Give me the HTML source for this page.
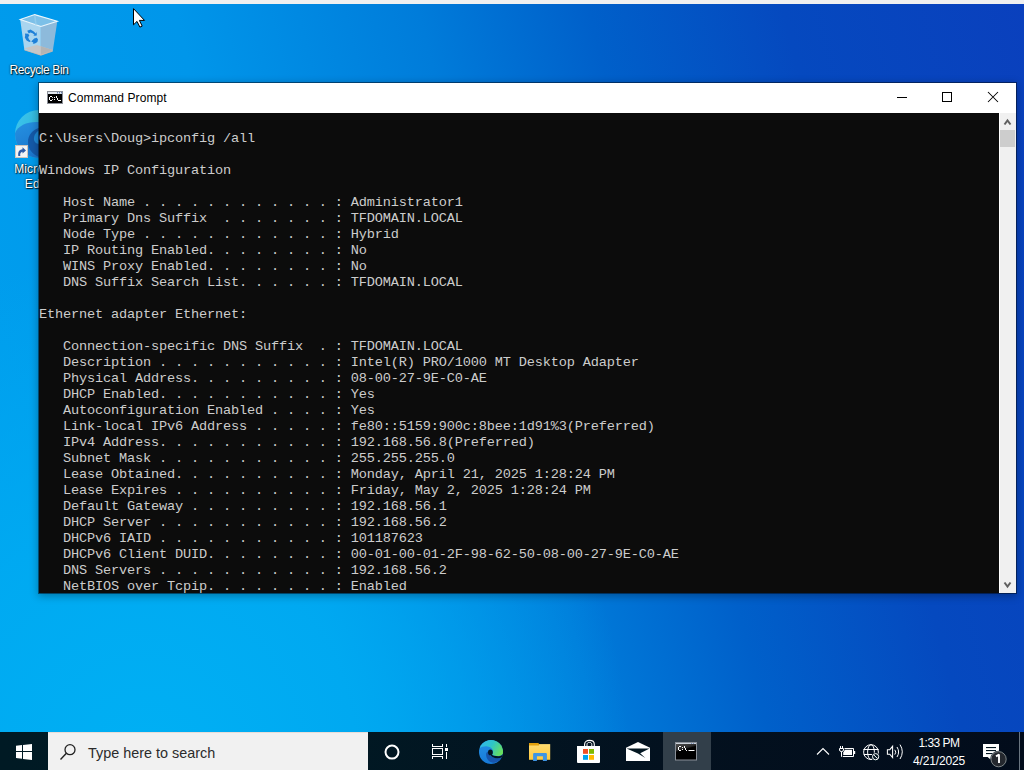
<!DOCTYPE html>
<html><head><meta charset="utf-8">
<style>
*{margin:0;padding:0;box-sizing:border-box}
html,body{width:1024px;height:770px;overflow:hidden}
body{position:relative;font-family:"Liberation Sans",sans-serif;background:#0090e8}
#bg{position:absolute;left:0;top:0;width:1024px;height:770px;
background:radial-gradient(ellipse 480px 520px at 150px 770px,rgba(0,176,244,1) 0%,rgba(0,172,242,.85) 45%,rgba(0,165,238,0) 100%),
linear-gradient(76deg,#00a0ee 0%,#0096ea 30%,#007cda 50%,#0060ca 64%,#0549bf 80%,#0a40bd 100%);}
#topstrip{position:absolute;left:0;top:0;width:1024px;height:4px;background:#f0f0f0}
.lbl{position:absolute;color:#fff;font-size:12px;line-height:15px;text-align:center;white-space:nowrap;letter-spacing:-0.4px;
text-shadow:0 0 2px rgba(0,0,0,.9),1px 1px 1px rgba(0,0,0,.8)}
svg{position:absolute;overflow:visible}
#win{position:absolute;left:38px;top:82px;width:979px;height:512px;background:#fff;background-clip:padding-box;border:1px solid rgba(0,10,25,.5);
box-shadow:0 2px 8px rgba(0,0,0,.3)}
#title{position:absolute;left:0;top:0;width:100%;height:30px;background:#fff}
#title .t{position:absolute;left:29px;top:8.3px;font-size:12px;line-height:14px;color:#000;letter-spacing:0.1px}
#console{position:absolute;left:0;top:30px;width:960px;height:480px;background:#0c0c0c;overflow:hidden}
#console pre{font-family:"Liberation Mono",monospace;font-size:13.6px;letter-spacing:-0.16133px;line-height:16px;color:#cccccc;white-space:pre;padding-top:2px}
#sb{position:absolute;left:961px;top:30px;width:16px;height:480px;background:#f0f0f0}
#thumb{position:absolute;left:0;top:17px;width:15px;height:17px;background:#cdcdcd}
#taskbar{position:absolute;left:0;top:732px;width:1024px;height:38px;background:linear-gradient(90deg,#001a24 0%,#011823 35%,#03111f 65%,#020c1b 100%)}
#search{position:absolute;left:48px;top:0;width:320px;height:38px;background:#f1f1f1;border-top:1px solid #e8ddd8}
#search .t{position:absolute;left:40px;top:12px;font-size:14.4px;line-height:16px;color:#2b2b2b}
#active{position:absolute;left:663px;top:0;width:48px;height:38px;background:#323f4a}
.clock{position:absolute;color:#fff;font-size:12px;line-height:14px;text-align:center;white-space:nowrap}
#sdline{position:absolute;left:1019px;top:0;width:1px;height:38px;background:#6a7580}
</style></head><body>
<div id="bg"></div>
<div id="topstrip"></div>

<!-- Recycle bin -->
<svg style="left:0;top:0" width="80" height="80" viewBox="0 0 80 80">
  <path d="M20.2 19.5 L24.4 49.9 L40.9 55.2 L40.9 26.5 Z" fill="#a9d5ef"/>
  <path d="M40.9 26.5 L40.9 55.2 L52.8 51.1 L57.3 21.2 Z" fill="#8dbadb"/>
  <path d="M24.4 48.3 L36.6 44.9 L52.8 49.9 L40.9 55.2 Z" fill="#c6c6c6"/>
  <path d="M36.6 44.9 L52.8 49.9 L40.9 55.2 L40.9 46.2 Z" fill="#b4b4b4"/>
  <path d="M24.4 49.9 L40.9 55.2 L52.8 51.1" stroke="#d9b9a6" stroke-width="0.8" fill="none"/>
  <path d="M20.2 19.5 L34.7 14.6 L57.3 21.2 L40.9 26.5 Z" fill="#7cc0e8" stroke="#eef7fc" stroke-width="1.1"/>
  <path d="M34.7 15 L36 25" stroke="#9ad0ee" stroke-width="1.6" fill="none" opacity=".7"/>
  <g fill="#1e80d8">
    <path d="M27.2 30.8 L30.5 29.6 L33.8 31.6 L35.8 33.4 L36.6 31.8 L36.8 35.6 L33.2 36 L34.6 35 L32.6 33.2 L30.4 32.4 L28.8 33.4 Z"/>
    <path d="M25 33.6 L28 33.8 L29.4 35.2 L28.2 37.2 L29 39.6 L30.8 41.2 L29.4 42 L26.6 40.4 L24.8 37.4 L25.2 35.6 Z"/>
    <path d="M31.2 41.4 L34.2 38.4 L36.8 37.8 L38 39.4 L37.4 42 L35 43.4 L32.8 43.8 L33.4 42.6 Z"/>
  </g>
</svg>
<div class="lbl" style="left:0;top:63px;width:78px">Recycle Bin</div>

<!-- Edge desktop icon -->
<svg style="left:0;top:100px" width="50" height="70" viewBox="0 100 50 70">
  <defs>
    <linearGradient id="edT" x1="0" y1="0" x2="1" y2="0.3"><stop offset="0" stop-color="#3cc4f0"/><stop offset="1" stop-color="#2ab0c8"/></linearGradient>
    <linearGradient id="edB" x1="0" y1="0" x2="0.6" y2="1"><stop offset="0" stop-color="#2592e2"/><stop offset="1" stop-color="#1a70c8"/></linearGradient>
    <clipPath id="edC"><circle cx="39" cy="134" r="24"/></clipPath>
  </defs>
  <circle cx="39" cy="134" r="24" fill="url(#edT)"/>
  <g clip-path="url(#edC)">
    <path d="M14 138 C14 127 26 121 39 122 C50 123 58 130 60 140 L60 160 L14 160 Z" fill="url(#edB)"/>
    <path d="M40 127.5 C32 129.5 27.5 136 28 143 C28.5 151 35 156.5 44 158.5 L60 160 L60 127.5 Z" fill="#1459a8"/>
    <path d="M40 130 C35.5 132 33.5 136 34 140 C35 143 37 144 40 144 Z" fill="#1e8ad8"/>
  </g>
  <rect x="15.5" y="145.5" width="12" height="12" fill="#f4f4f4" stroke="#d0c4bc" stroke-width="1"/>
  <path d="M18.3 156 C17.8 152 19 149.5 22.5 149.2 L22.5 147.2 L26 150.4 L22.5 153.6 L22.5 151.8 C20.8 152 19.8 153.5 20.3 156 Z" fill="#2d5aa6"/>
</svg>
<div class="lbl" style="left:0;top:161.6px;width:78px;letter-spacing:0.1px">Microsoft<br>Edge</div>

<div id="win">
  <div id="title">
    <svg style="left:8px;top:8px" width="16" height="13" viewBox="0 0 16 13">
      <rect x="0.5" y="0.5" width="15" height="12" fill="#000" stroke="#8c9098" stroke-width="1"/>
      <rect x="1" y="1" width="14" height="2" fill="#dfe5ec"/>
      <rect x="10" y="1.3" width="1" height="1" fill="#3a5a9a"/><rect x="12" y="1.3" width="1" height="1" fill="#3a5a9a"/><rect x="14" y="1.3" width="1" height="1" fill="#3a5a9a"/>
      <g fill="#fff">
        <rect x="3" y="5" width="2" height="1"/><rect x="2" y="6" width="1" height="3"/><rect x="3" y="9" width="2" height="1"/>
        <rect x="5" y="6" width="1" height="0.8"/><rect x="5" y="8.2" width="1" height="0.8"/>
        <rect x="7" y="6" width="1" height="1"/><rect x="7" y="8" width="1" height="1"/>
        <rect x="9" y="5" width="1" height="2"/><rect x="10" y="7" width="1" height="2"/><rect x="11" y="9" width="1" height="1"/>
        <rect x="12" y="9" width="2" height="1"/>
      </g>
    </svg>
    <span class="t">Command Prompt</span>
    <svg style="left:858px;top:0" width="120" height="30" viewBox="0 0 120 30">
      <rect x="0" y="14" width="10" height="1" fill="#000"/>
      <rect x="45.5" y="9.5" width="9" height="9" fill="none" stroke="#000" stroke-width="1"/>
      <path d="M91 9 L101 19 M101 9 L91 19" stroke="#000" stroke-width="1.05"/>
    </svg>
  </div>
  <div id="console"><pre>

C:\Users\Doug>ipconfig /all

Windows IP Configuration

   Host Name . . . . . . . . . . . . : Administrator1
   Primary Dns Suffix  . . . . . . . : TFDOMAIN.LOCAL
   Node Type . . . . . . . . . . . . : Hybrid
   IP Routing Enabled. . . . . . . . : No
   WINS Proxy Enabled. . . . . . . . : No
   DNS Suffix Search List. . . . . . : TFDOMAIN.LOCAL

Ethernet adapter Ethernet:

   Connection-specific DNS Suffix  . : TFDOMAIN.LOCAL
   Description . . . . . . . . . . . : Intel(R) PRO/1000 MT Desktop Adapter
   Physical Address. . . . . . . . . : 08-00-27-9E-C0-AE
   DHCP Enabled. . . . . . . . . . . : Yes
   Autoconfiguration Enabled . . . . : Yes
   Link-local IPv6 Address . . . . . : fe80::5159:900c:8bee:1d91%3(Preferred)
   IPv4 Address. . . . . . . . . . . : 192.168.56.8(Preferred)
   Subnet Mask . . . . . . . . . . . : 255.255.255.0
   Lease Obtained. . . . . . . . . . : Monday, April 21, 2025 1:28:24 PM
   Lease Expires . . . . . . . . . . : Friday, May 2, 2025 1:28:24 PM
   Default Gateway . . . . . . . . . : 192.168.56.1
   DHCP Server . . . . . . . . . . . : 192.168.56.2
   DHCPv6 IAID . . . . . . . . . . . : 101187623
   DHCPv6 Client DUID. . . . . . . . : 00-01-00-01-2F-98-62-50-08-00-27-9E-C0-AE
   DNS Servers . . . . . . . . . . . : 192.168.56.2
   NetBIOS over Tcpip. . . . . . . . : Enabled
</pre></div>
  <div id="sb">
    <svg style="left:0;top:0" width="15" height="480" viewBox="0 0 15 480">
      <path d="M4.5 11.5 L7.5 7.5 L10.5 11.5" stroke="#606060" stroke-width="2" fill="none"/>
      <path d="M4.5 469.5 L7.5 473.5 L10.5 469.5" stroke="#606060" stroke-width="2" fill="none"/>
    </svg>
    <div id="thumb"></div>
  </div>
</div>

<!-- cursor -->
<svg style="left:132px;top:7px" width="16" height="22" viewBox="0 0 16 22">
  <path d="M1.5 1.6 L1.5 17.8 L5 14.4 L7.9 20.1 L10.2 19.1 L7.4 13.4 L12.5 13.4 Z" fill="#fff" stroke="#000" stroke-width="1" stroke-linejoin="miter"/>
</svg>

<div id="taskbar">
  <!-- start -->
  <svg style="left:16px;top:11px" width="17" height="18" viewBox="0 0 17 18">
    <path d="M0 2.8 L6 2.1 L6 8 L0 8 Z M7 2 L16 0.9 L16 8 L7 8 Z M0 9 L6 9 L6 15.8 L0 15.1 Z M7 9 L16 9 L16 17 L7 15.9 Z" fill="#fff"/>
  </svg>
  <div id="search">
    <svg style="left:10px;top:10px" width="18" height="18" viewBox="0 0 18 18">
      <circle cx="12" cy="6.7" r="5" fill="none" stroke="#222" stroke-width="1.3"/>
      <path d="M8.4 10.3 L2.5 16.5" stroke="#222" stroke-width="1.4"/>
    </svg>
    <span class="t">Type here to search</span>
  </div>
  <!-- cortana -->
  <svg style="left:384px;top:12px" width="16" height="16" viewBox="0 0 16 16">
    <circle cx="8" cy="8.1" r="6.5" fill="none" stroke="#fff" stroke-width="2"/>
  </svg>
  <!-- task view -->
  <svg style="left:431px;top:11px" width="18" height="17" viewBox="0 0 18 17">
    <g fill="#fff">
      <rect x="1" y="1" width="1" height="3"/><rect x="11" y="1" width="1" height="3"/><rect x="1" y="3" width="11" height="1"/>
      <rect x="1" y="13" width="11" height="1"/><rect x="1" y="13" width="1" height="3"/><rect x="11" y="13" width="1" height="3"/>
      <rect x="15" y="1" width="1" height="3"/><rect x="14" y="5" width="3" height="3"/><rect x="15" y="9" width="1" height="7"/>
    </g>
    <rect x="1.5" y="5.5" width="10" height="6" fill="none" stroke="#fff" stroke-width="1"/>
  </svg>
  <!-- edge -->
  <svg style="left:479px;top:8px" width="24" height="24" viewBox="0 0 24 24">
    <defs>
      <linearGradient id="eg1" x1="0" y1="0.2" x2="1" y2="0.6"><stop offset="0" stop-color="#33b4f0"/><stop offset=".5" stop-color="#2ec4c8"/><stop offset="1" stop-color="#6ae05a"/></linearGradient>
      <linearGradient id="eg2" x1="0" y1="0" x2="0.3" y2="1"><stop offset="0" stop-color="#2592e6"/><stop offset="1" stop-color="#167ad8"/></linearGradient>
      <clipPath id="ec"><circle cx="12" cy="12" r="12"/></clipPath>
    </defs>
    <g clip-path="url(#ec)">
      <rect x="0" y="0" width="24" height="24" fill="url(#eg2)"/>
      <path d="M7.2 13 C6.6 17.5 9 21.5 13 22.5 C17 23.5 20.5 21.5 22.6 17.6 C19.5 18.8 16 18.6 13.5 17 C11 15.5 9 14 8.8 11.5 Z" fill="#1655ad"/>
      <path d="M11.5 14.3 C14 15.9 18.5 16.7 21 16.1 C23 15.6 24.5 14 25 12 L25 24 L22.6 17.6 C19.5 18.8 16 18.6 13.5 17 C12.5 16.4 12 15.8 11.5 14.8 Z" fill="#031621"/>
      <path d="M-1 9.5 C2 6.8 5.5 5.8 8.6 6.4 C11.5 7 13 8.2 13.6 9.8 C14.3 11.6 14.2 13.4 13.3 14.5 C15.3 15.8 18.5 16.4 21 15.8 C23 15.2 24.5 13.5 25 12 L25 -1 L-1 -1 Z" fill="url(#eg1)"/>
      <ellipse cx="11.4" cy="12.4" rx="2.4" ry="2.8" fill="#031621"/>
    </g>
  </svg>
  <!-- folder -->
  <svg style="left:529px;top:11px" width="22" height="19" viewBox="0 0 22 19">
    <defs><linearGradient id="fg" x1="0" y1="0" x2="0" y2="1"><stop offset="0" stop-color="#ffdb70"/><stop offset="1" stop-color="#ffca3e"/></linearGradient></defs>
    <path d="M0 0 L9 0 L10.2 1.2 L10.2 2.6 L0 2.6 Z" fill="#e4a010"/>
    <rect x="0" y="1.1" width="21.2" height="15.7" fill="url(#fg)"/>
    <path d="M0 0 L9 0 L10.2 1.2 L10 2.6 L0 2.6 Z" fill="#e2a00c"/>
    <path d="M4.1 17.9 L4.1 11 Q4.1 9.9 5.2 9.9 L16.8 9.9 Q17.9 9.9 17.9 11 L17.9 17.9 L13.9 17.9 L13.9 13.2 L7.9 13.2 L7.9 17.9 Z" fill="#3e95e4"/>
  </svg>
  <!-- store -->
  <svg style="left:576px;top:7px" width="26" height="26" viewBox="0 0 26 26">
    <path d="M8.6 7 L8.6 5.2 C8.6 2.6 10.8 1.4 13.4 1.4 C16 1.4 18.3 2.6 18.3 5.2 L18.3 7" stroke="#fff" stroke-width="1.1" fill="none"/>
    <path d="M11 7 L11 5.4 C11 4.1 12 3.4 13.4 3.4 C14.8 3.4 15.8 4.1 15.8 5.4 L15.8 7" stroke="#fff" stroke-width="1" fill="none"/>
    <path d="M1 7 L24 7 L24 23 Q24 24.1 23 24.1 L2 24.1 Q1 24.1 1 23 Z" fill="#fff"/>
    <rect x="7" y="10" width="5" height="4.8" fill="#f25022"/>
    <rect x="13" y="10" width="5" height="4.8" fill="#7fba00"/>
    <rect x="7" y="16" width="5" height="4.8" fill="#00a4ef"/>
    <rect x="13" y="16" width="5" height="4.8" fill="#ffb900"/>
  </svg>
  <!-- mail -->
  <svg style="left:626px;top:9px" width="25" height="21" viewBox="0 0 25 21">
    <path d="M0 6.8 L12 1 L24 6.8 L24 20 L0 20 Z" fill="#fff"/>
    <path d="M0.6 7.6 L23.6 7.6 L14.2 12.2 L19.3 16.9 L12 12.4 Z" fill="#031621"/>
  </svg>
  <div id="active"></div>
  <!-- cmd -->
  <svg style="left:675px;top:10px" width="23" height="20" viewBox="0 0 23 20">
    <defs><linearGradient id="cg" x1="0" y1="0" x2="0.35" y2="1"><stop offset="0" stop-color="#5a5a5a"/><stop offset=".42" stop-color="#2a2a2a"/><stop offset=".5" stop-color="#000"/><stop offset="1" stop-color="#000"/></linearGradient></defs>
    <rect x="0.5" y="0.5" width="21" height="17.5" fill="url(#cg)" stroke="#8a9098" stroke-width="1"/>
    <rect x="1" y="1" width="20" height="1" fill="#c9d0d8"/>
    <rect x="16" y="1" width="1" height="1" fill="#7a90b8"/><rect x="18" y="1" width="1" height="1" fill="#7a90b8"/>
    <g fill="#fff">
      <rect x="4" y="4" width="2" height="1"/><rect x="3" y="5" width="1" height="3"/><rect x="4" y="8" width="2" height="1"/>
      <rect x="7" y="5" width="1" height="1"/><rect x="7" y="7" width="1" height="1"/>
      <rect x="9" y="4" width="1" height="2"/><rect x="10" y="6" width="1" height="2"/><rect x="11" y="8" width="1" height="1"/>
      <rect x="13.5" y="8" width="6" height="1"/>
    </g>
  </svg>
  <!-- tray -->
  <svg style="left:816px;top:14px" width="14" height="10" viewBox="0 0 14 10">
    <path d="M1 8.5 L7 2.5 L13 8.5" stroke="#fff" stroke-width="1.1" fill="none"/>
  </svg>
  <svg style="left:838px;top:12px" width="20" height="14" viewBox="0 0 20 14">
    <rect x="2" y="2" width="1" height="2" fill="#fff"/><rect x="4" y="2" width="1" height="2" fill="#fff"/>
    <path d="M1.5 4.5 L5.5 4.5 L5.5 6 Q5.5 7.5 3.5 7.5 Q1.5 7.5 1.5 6 Z" fill="none" stroke="#fff" stroke-width="1"/>
    <path d="M3.5 7.5 L3.5 12.8" stroke="#fff" stroke-width="1"/>
    <path d="M6.5 4.5 L15.5 4.5 L15.5 12.5 L4.8 12.5" stroke="#fff" stroke-width="1" fill="none"/>
    <path d="M6.9 5.8 L14 5.8 L14 11 L5.2 11 L5.2 8.6 Z" fill="#fff"/>
    <rect x="16" y="7" width="1.2" height="3" fill="#fff"/>
  </svg>
  <svg style="left:862px;top:11px" width="18" height="18" viewBox="0 0 18 18">
    <g fill="none" stroke="#fff" stroke-width="1">
      <circle cx="9" cy="9.1" r="7.4"/>
      <ellipse cx="9" cy="9.1" rx="3.4" ry="7.4"/>
      <path d="M1.4 6.5 L16.6 6.5 M1.8 11.5 L10.6 11.5"/>
    </g>
    <circle cx="13.6" cy="13.7" r="4.3" fill="#031621"/>
    <circle cx="13.6" cy="13.7" r="3.1" fill="none" stroke="#fff" stroke-width="1"/>
    <path d="M11.7 11.8 L15.5 15.6" stroke="#fff" stroke-width="1"/>
  </svg>
  <svg style="left:886px;top:12px" width="18" height="16" viewBox="0 0 18 16">
    <path d="M1.4 5.7 L3.8 5.7 L6.6 2.3 L6.6 13.6 L3.8 10.2 L1.4 10.2 Z" fill="none" stroke="#fff" stroke-width="1.05"/>
    <path d="M8.8 5.8 Q10.8 8.2 8.8 10.6" stroke="#fff" stroke-width="1" fill="none"/>
    <path d="M11 3 Q14.2 8 11 13" stroke="#fff" stroke-width="1" fill="none"/>
    <path d="M14 0.6 Q18.6 7.8 14 15" stroke="#fff" stroke-width="1" fill="none"/>
  </svg>
  <div class="clock" style="left:903px;top:4px;width:72px;letter-spacing:-0.5px">1:33 PM</div>
  <div class="clock" style="left:903px;top:22px;width:72px;letter-spacing:-0.15px">4/21/2025</div>
  <!-- notifications -->
  <svg style="left:981px;top:10px" width="30" height="28" viewBox="0 0 30 28">
    <path d="M2 2 L18 2 L18 15 L11.5 15 L9.5 17.4 L6.6 15 L2 15 Z" fill="#fff"/>
    <rect x="5" y="5" width="10" height="1.1" fill="#031621"/>
    <rect x="5" y="8" width="10" height="1.1" fill="#031621"/>
    <rect x="5" y="11" width="6" height="1.1" fill="#031621"/>
    <circle cx="17.6" cy="17.2" r="8.4" fill="#031621"/>
    <circle cx="17.6" cy="17.2" r="7.6" fill="#24282e" stroke="#8a8d90" stroke-width="0.9"/>
    <path d="M15 14.4 L18 12.6 L18 21" stroke="#fff" stroke-width="1.9" fill="none" stroke-linejoin="bevel"/>
  </svg>
  <div id="sdline"></div>
</div>
</body></html>
